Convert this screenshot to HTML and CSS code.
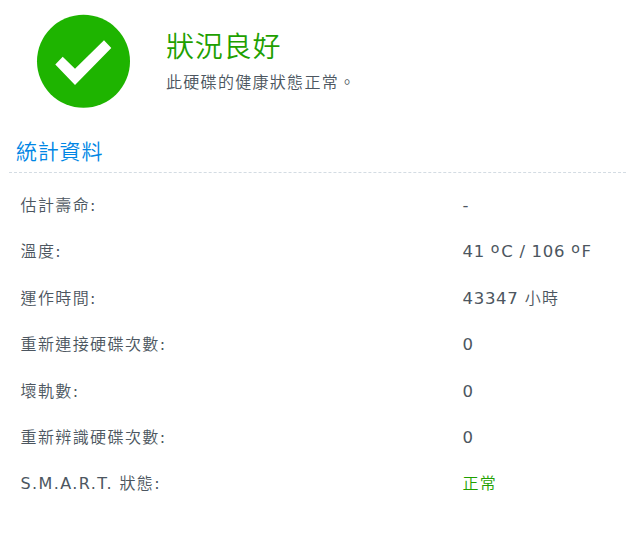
FILE: index.html
```
<!DOCTYPE html>
<html lang="zh-Hant">
<head>
  <meta charset="UTF-8">
  <meta name="viewport" content="width=device-width, initial-scale=1.0">
  <title>硬碟健康狀態</title>
  <link rel="stylesheet" href="styles.css">
</head>
<body>

  <!-- status -->
  <div class="status">
    <svg class="status-icon" viewBox="0 0 94 94">
      <circle cx="47.500" cy="47.300" r="46.500" fill="#1eb400"/>
      <path d="M19.300 50.500 L26.700 42.700 L39 54.700 L68 26.300 L75.300 34 L39 71 Z" fill="#fff"/>
    </svg>
    <div class="status-text">
      <h1>狀況良好</h1>
      <p>此硬碟的健康狀態正常。</p>
    </div>
  </div>

  <!-- statistics -->
  <h2 class="section-title">統計資料</h2>
  <dl class="stats">
    <dt>估計壽命<b>:</b></dt><dd><b>-</b></dd>
    <dt>溫度<b>:</b></dt><dd><b>41 <i>º</i>C / 106 <i>º</i>F</b></dd>
    <dt>運作時間<b>:</b></dt><dd><b>43347</b> 小時</dd>
    <dt>重新連接硬碟次數<b>:</b></dt><dd><b>0</b></dd>
    <dt>壞軌數<b>:</b></dt><dd><b>0</b></dd>
    <dt>重新辨識硬碟次數<b>:</b></dt><dd><b>0</b></dd>
    <dt><b>S.M.A.R.T.</b> 狀態<b>:</b></dt><dd class="ok">正常</dd>
  </dl>

</body>
</html>
```
FILE: styles.css
```
* {
  margin: 0;
  padding: 0;
  box-sizing: border-box;
}

body {
  background: #fff;
  color: #4c5660;
  font-family: "DejaVu Sans", "Noto Sans CJK TC", sans-serif;
  font-size: 16px;
  font-weight: 350;
}

.status {
  display: flex;
  height: 130px;
  padding: 14px 0 0 36px;
}

.status-icon {
  width: 94px;
  height: 94px;
  overflow: visible;
}

.status-text {
  margin-left: 36px;
  padding-top: 15px;
}

.status-text h1 {
  color: #1ea000;
  font-size: 28px;
  font-weight: 350;
  line-height: 38px;
  letter-spacing: 0.8px;
}

.status-text p {
  line-height: 32px;
  letter-spacing: 1.3px;
}

.section-title {
  height: 43px;
  margin-left: 9px;
  padding-left: 7px;
  border-bottom: 1px dashed #d4dce3;
  color: #0086e5;
  font-size: 21px;
  font-weight: 350;
  line-height: 44px;
  letter-spacing: 0.8px;
}

.stats {
  display: grid;
  grid-template-columns: 442px 1fr;
  grid-auto-rows: 46.4px;
  padding: 10px 0 0 20.5px;
  line-height: 46px;
  letter-spacing: 1.2px;
}

.stats dt {
  letter-spacing: 1.4px;
}

/* latin text and digits */
.stats b {
  font-weight: 400;
}

.stats dd b {
  font-size: 16.5px;
  letter-spacing: 0.7px;
}

/* degree mark */
.stats i {
  font-family: "Open Sans", sans-serif;
  font-size: 23px;
  font-style: normal;
  line-height: 1;
  letter-spacing: 1.8px;
  vertical-align: -5px;
}

.stats .ok {
  color: #1ea000;
}
```
